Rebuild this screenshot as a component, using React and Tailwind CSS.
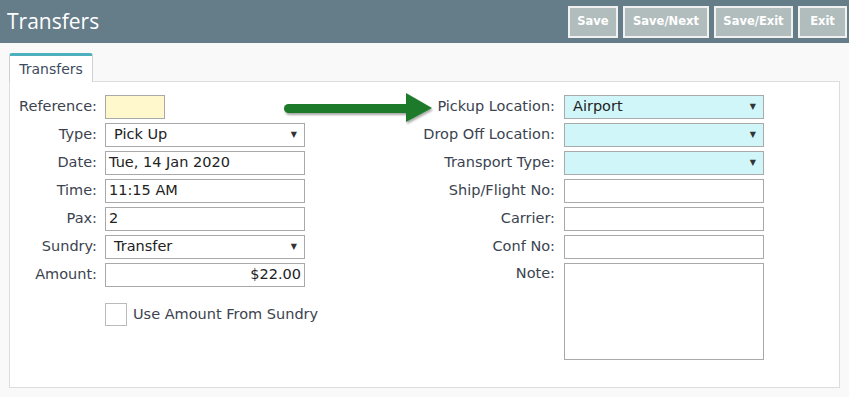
import React from "react";

const FONT = { fontFamily: '"DejaVu Sans", Verdana, sans-serif' };

function Label({ children }) {
  return (
    <div className="h-6 flex items-center justify-end text-[14.5px] text-[#3b4350] whitespace-nowrap">
      {children}
    </div>
  );
}

function Field({ value = "", select = false, align = "left", tint = "bg-white", width = "w-[200px]" }) {
  return (
    <div
      className={`h-6 ${width} ${tint} border border-[#a9a9a9] flex items-center pl-[3px] pr-[7px] text-[14.5px] text-[#222] ${
        align === "right" ? "justify-end !pr-[3px]" : "justify-between"
      }`}
    >
      <span className={select ? "pl-[5px]" : ""}>{value}</span>
      {select && <span className="text-[8px] text-[#333]">▼</span>}
    </div>
  );
}

function GreenArrow() {
  return (
    <svg width="160" height="40" viewBox="0 0 160 40" className="absolute left-[280px] top-[89px]">
      <defs>
        <filter id="sh" x="-10%" y="-30%" width="120%" height="160%">
          <feDropShadow dx="1" dy="2" stdDeviation="1.2" floodColor="#000" floodOpacity="0.35" />
        </filter>
      </defs>
      <g filter="url(#sh)" fill="#1b7a2b">
        <rect x="4" y="15" width="126" height="9" rx="4.5" />
        <polygon points="126,4 152,19 126,33" />
      </g>
    </svg>
  );
}

const BUTTONS = [
  { label: "Save", w: "w-[50px]" },
  { label: "Save/Next", w: "w-[86px]" },
  { label: "Save/Exit", w: "w-[79px]" },
  { label: "Exit", w: "w-[49px]" },
];

export default function App() {
  return (
    <div className="w-[849px] h-[397px] bg-[#f9f9f9] relative overflow-hidden" style={FONT}>
      {/* Header */}
      <div className="h-[43px] bg-[#657c89] flex items-center justify-between pl-[7px] pr-[2px]">
        <h1 className="text-white text-[21px] leading-none" style={{ fontFamily: '"Open Sans", sans-serif' }}>
          Transfers
        </h1>
        <div className="flex gap-[5px]">
          {BUTTONS.map((b) => (
            <button
              key={b.label}
              className={`h-[32px] ${b.w} bg-[#b1bdbd] border-2 border-[#f1f1f1] text-white text-[11.5px] font-bold`}
            >
              {b.label}
            </button>
          ))}
        </div>
      </div>

      {/* Tab */}
      <div className="pl-[9px] pt-[10px]">
        <div className="w-[84px] h-[29px] bg-white border border-[#d0d0d0] border-b-0 border-t-[3px] border-t-[#4db1bd] rounded-t-[3px] flex items-center justify-center text-[14px] text-[#3d4b60] relative z-10 -mb-px">
          Transfers
        </div>
      </div>

      {/* Panel */}
      <div className="mx-[9px] w-[831px] h-[307px] bg-white border border-[#dddddd] pt-[13px] flex">
        {/* Left column */}
        <div className="flex gap-[8px]">
          <div className="w-[87px] flex flex-col gap-1">
            <Label>Reference:</Label>
            <Label>Type:</Label>
            <Label>Date:</Label>
            <Label>Time:</Label>
            <Label>Pax:</Label>
            <Label>Sundry:</Label>
            <Label>Amount:</Label>
          </div>
          <div className="w-[200px] flex flex-col gap-1">
            <Field tint="bg-[#fff8cc]" width="w-[60px]" />
            <Field value="Pick Up" select />
            <Field value="Tue, 14 Jan 2020" />
            <Field value="11:15 AM" />
            <Field value="2" />
            <Field value="Transfer" select />
            <Field value="$22.00" align="right" />
            <div className="flex items-center gap-[6px] mt-[12px] whitespace-nowrap">
              <div className="w-[22px] h-[23px] shrink-0 border border-[#bbbbbb] bg-white" />
              <span className="text-[14.5px] text-[#3b4350]">Use Amount From Sundry</span>
            </div>
          </div>
        </div>

        {/* Right column */}
        <div className="flex gap-[9px] ml-[100px]">
          <div className="w-[150px] flex flex-col gap-1">
            <Label>Pickup Location:</Label>
            <Label>Drop Off Location:</Label>
            <Label>Transport Type:</Label>
            <Label>Ship/Flight No:</Label>
            <Label>Carrier:</Label>
            <Label>Conf No:</Label>
            <div className="h-6 flex items-start justify-end text-[14.5px] text-[#3b4350]">Note:</div>
          </div>
          <div className="flex flex-col gap-1">
            <Field value="Airport" select tint="bg-[#d0f6fa]" />
            <Field select tint="bg-[#d0f6fa]" />
            <Field select tint="bg-[#d0f6fa]" />
            <Field />
            <Field />
            <Field />
            <div className="w-[200px] h-[97px] border border-[#a9a9a9] bg-white" />
          </div>
        </div>
      </div>

      <GreenArrow />
    </div>
  );
}
